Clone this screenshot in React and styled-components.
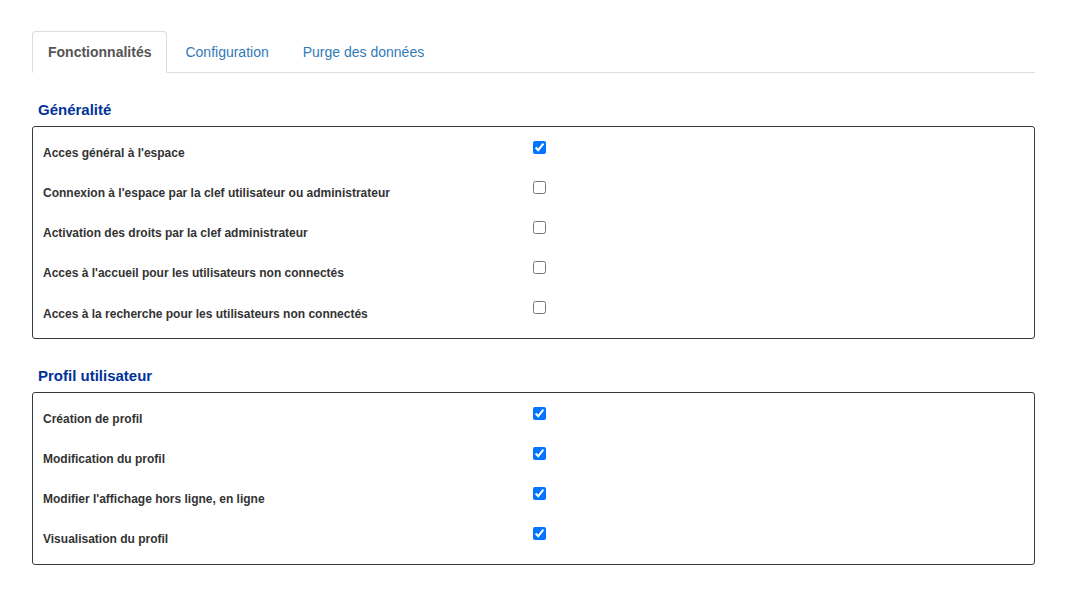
import React from 'react'
import styled, { createGlobalStyle } from 'styled-components'

const GlobalStyle = createGlobalStyle`
  body {
    margin: 0;
    background: #fff;
    font-family: "Liberation Sans", Arial, sans-serif;
    color: #333;
  }
`

const Page = styled.div`
  padding: 31px 31px 0 32px;
`

const Tabs = styled.ul`
  display: flex;
  margin: 0;
  padding: 0;
  list-style: none;
  border-bottom: 1px solid #ddd;
`

const Tab = styled.li`
  margin-right: 2px;
  margin-bottom: -1px;
  padding: 10px 15px;
  font-size: 14px;
  line-height: 20px;
  border: 1px solid ${props => (props.active ? '#ddd' : 'transparent')};
  border-bottom-color: ${props => (props.active ? '#fff' : 'transparent')};
  border-radius: 4px 4px 0 0;
  background: ${props => (props.active ? '#fff' : 'transparent')};
  color: ${props => (props.active ? '#555' : '#337ab7')};
  font-weight: ${props => (props.active ? 'bold' : 'normal')};
  cursor: pointer;
`

const SectionTitle = styled.h3`
  margin: 0;
  padding: 0 6px;
  font-size: 15px;
  line-height: 18px;
  font-weight: bold;
  color: #003399;
`

const Section = styled.section`
  margin-top: 28px;
`

const Box = styled.div`
  margin-top: 7px;
  border: 1px solid #343a40;
  border-radius: 3px;
  padding: 6px 0 5px 0;
`

const Row = styled.div`
  display: grid;
  grid-template-columns: 500px 1fr;
  height: 40px;
`

const Label = styled.label`
  padding-left: 10px;
  font-size: 12px;
  font-weight: bold;
  line-height: ${props => (props.tall ? '42px' : '40px')};
  color: #333;
`

const Check = styled.input.attrs({ type: 'checkbox' })`
  width: 13px;
  height: 13px;
  margin: 8px 0 0 0;
  accent-color: #0075ff;
`

const sections = [
  {
    title: 'Généralité',
    rows: [
      ["Acces général à l'espace", true],
      ["Connexion à l'espace par la clef utilisateur ou administrateur", false],
      ['Activation des droits par la clef administrateur', false],
      ["Acces à l'accueil pour les utilisateurs non connectés", false],
      ['Acces à la recherche pour les utilisateurs non connectés', false, true],
    ],
  },
  {
    title: 'Profil utilisateur',
    rows: [
      ['Création de profil', true],
      ['Modification du profil', true],
      ["Modifier l'affichage hors ligne, en ligne", true],
      ['Visualisation du profil', true],
    ],
  },
]

export default function App() {
  return (
    <Page>
      <GlobalStyle />
      <Tabs>
        <Tab active>Fonctionnalités</Tab>
        <Tab>Configuration</Tab>
        <Tab>Purge des données</Tab>
      </Tabs>
      {sections.map(section => (
        <Section key={section.title}>
          <SectionTitle>{section.title}</SectionTitle>
          <Box>
            {section.rows.map(([label, checked, tall]) => (
              <Row key={label}>
                <Label tall={tall}>{label}</Label>
                <div>
                  <Check defaultChecked={checked} />
                </div>
              </Row>
            ))}
          </Box>
        </Section>
      ))}
    </Page>
  )
}
